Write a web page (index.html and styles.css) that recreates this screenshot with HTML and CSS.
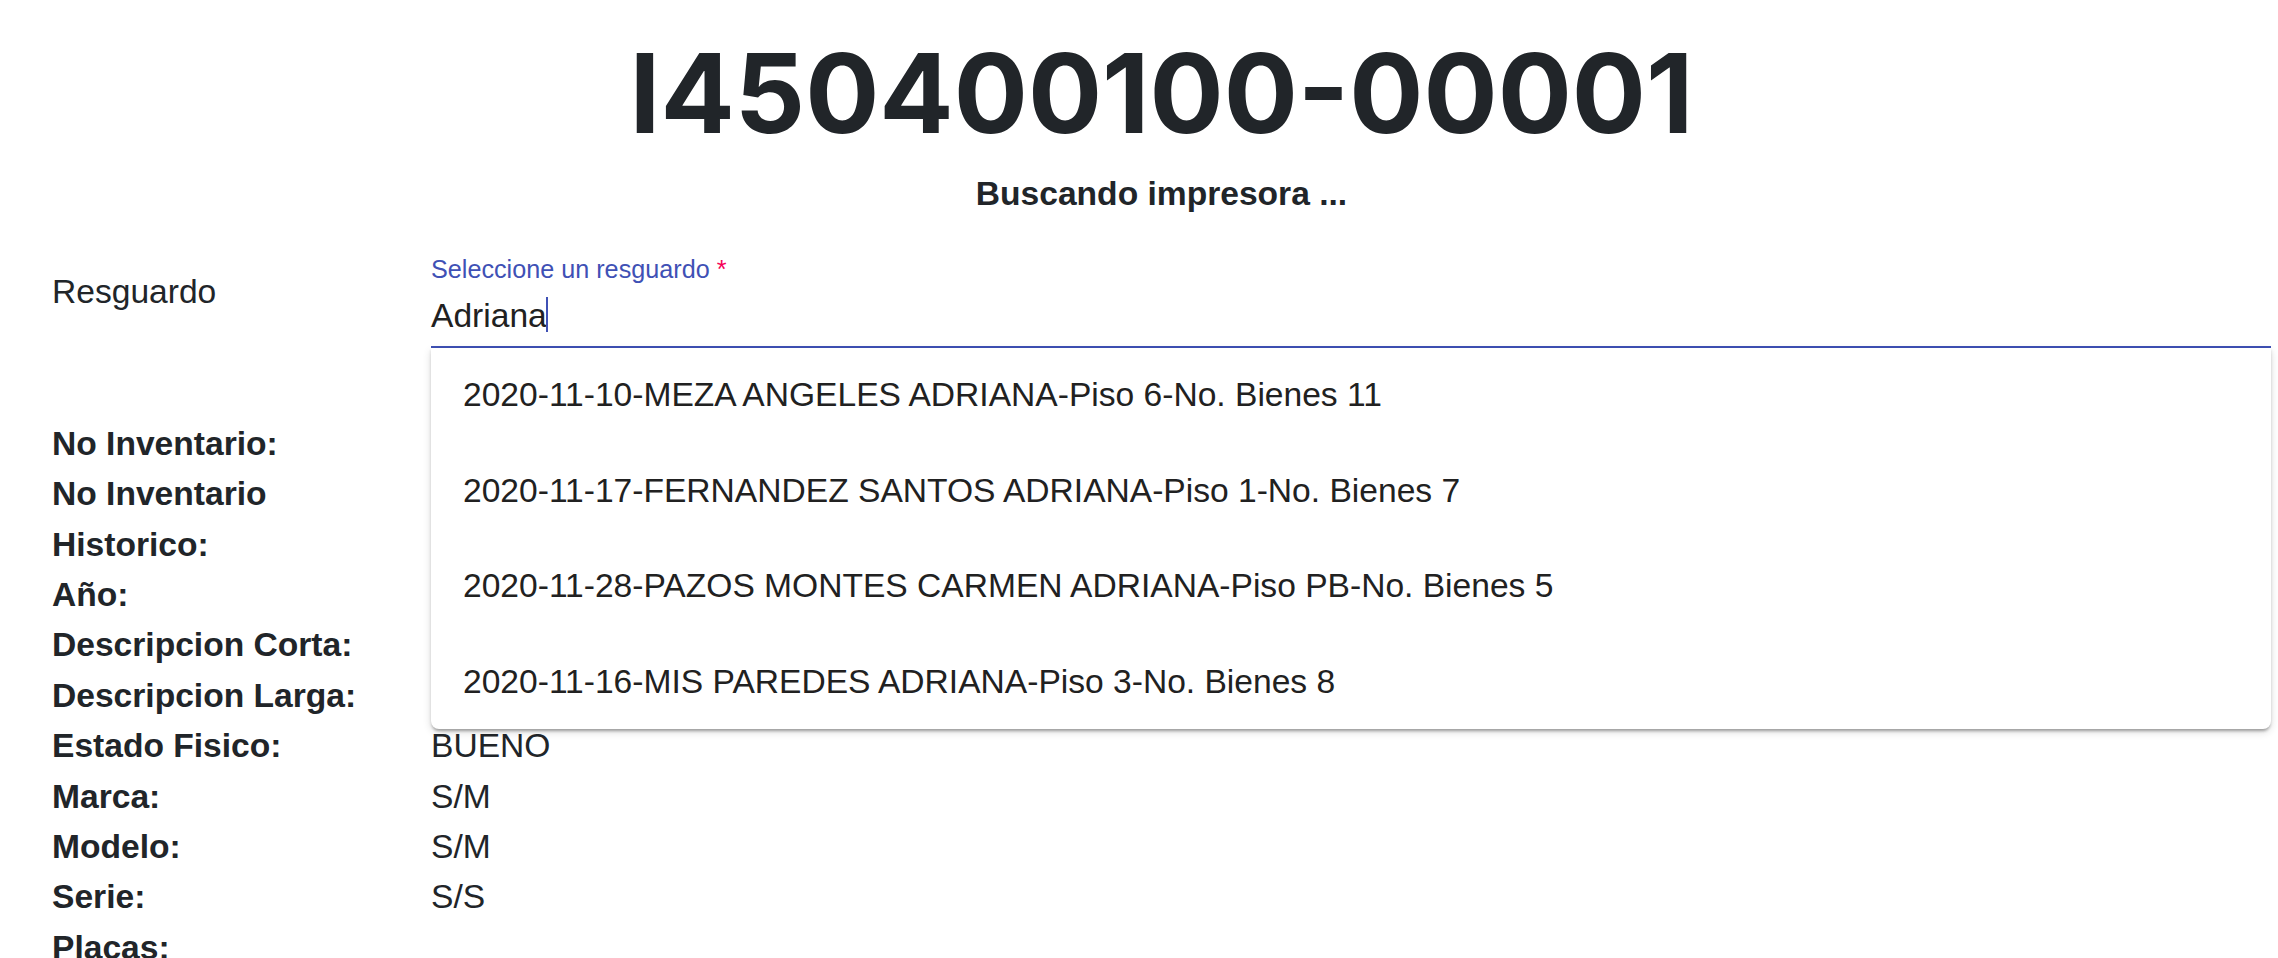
FILE: index.html
```html
<!DOCTYPE html>
<html lang="es">
<head>
<meta charset="utf-8">
<title>I450400100-00001</title>
<link rel="stylesheet" href="styles.css">
</head>
<body>
<main class="page">
  <h1 class="title">I450400100-00001</h1>
  <p class="status">Buscando impresora ...</p>

  <div class="row resguardo-row">
    <div class="label-plain">Resguardo</div>
    <div class="field">
      <label class="float-label">Seleccione un resguardo<span class="req"> *</span></label>
      <div class="input-line"><span class="input-text">Adriana</span><span class="caret"></span></div>
      <ul class="dropdown">
        <li class="option">2020-11-10-MEZA ANGELES ADRIANA-Piso 6-No. Bienes 11</li>
        <li class="option">2020-11-17-FERNANDEZ SANTOS ADRIANA-Piso 1-No. Bienes 7</li>
        <li class="option">2020-11-28-PAZOS MONTES CARMEN ADRIANA-Piso PB-No. Bienes 5</li>
        <li class="option">2020-11-16-MIS PAREDES ADRIANA-Piso 3-No. Bienes 8</li>
      </ul>
    </div>
  </div>

  <dl class="details">
    <dt>No Inventario:</dt><dd></dd>
    <dt>No Inventario<br>Historico:</dt><dd></dd>
    <dt>Año:</dt><dd></dd>
    <dt>Descripcion Corta:</dt><dd></dd>
    <dt>Descripcion Larga:</dt><dd></dd>
    <dt>Estado Fisico:</dt><dd>BUENO</dd>
    <dt>Marca:</dt><dd>S/M</dd>
    <dt>Modelo:</dt><dd>S/M</dd>
    <dt>Serie:</dt><dd>S/S</dd>
    <dt>Placas:</dt><dd></dd>
  </dl>
</main>
</body>
</html>
```

FILE: styles.css
```css
* { box-sizing: border-box; }

html, body {
  margin: 0;
  padding: 0;
  background: #ffffff;
}

body {
  font-family: "Liberation Sans", Arial, Helvetica, sans-serif;
  font-size: 33.6px;
  line-height: 50.4px;
  color: #212529;
  overflow: hidden;
}

.page {
  padding: 0 7px 0 52px;
}

.title {
  margin: 23px 0 0 0;
  font-family: Inter, "Liberation Sans", Arial, sans-serif;
  font-size: 110px;
  line-height: 141px;
  font-weight: 700;
  letter-spacing: 0;
  text-align: center;
  color: #212529;
}

.status {
  margin: 5.4px 0 0 0;
  font-weight: 700;
  text-align: center;
}

.row {
  display: grid;
  grid-template-columns: 379px 1fr;
}

.resguardo-row {
  margin-top: 34px;
  align-items: start;
}

.label-plain {
  margin-top: 13px;
}

.field {
  position: relative;
}

.float-label {
  display: block;
  font-size: 25.2px;
  line-height: 30px;
  color: #3f51b5;
}

.req {
  color: #f50057;
}

.input-line {
  margin-top: 12.6px;
  font-size: 33.6px;
  line-height: 40px;
  padding-bottom: 9.4px;
  border-bottom: 2px solid #3f51b5;
  color: #212121;
}

.caret {
  display: inline-block;
  width: 2px;
  height: 35px;
  margin-left: -1px;
  vertical-align: -5px;
  background: #3f51b5;
}

.dropdown {
  position: absolute;
  top: 100%;
  left: 0;
  right: 0;
  margin: 0;
  padding: 0;
  list-style: none;
  background: #ffffff;
  border-radius: 0 0 8px 8px;
  box-shadow: 0 4px 3px -2px rgba(0,0,0,0.2), 0 2px 3px 0 rgba(0,0,0,0.14), 0 3px 9px 0 rgba(0,0,0,0.14);
  z-index: 5;
}

.option {
  padding: 22.6px 32px 22.4px;
  line-height: 50.4px;
  color: #212121;
  white-space: nowrap;
}

.details {
  display: grid;
  grid-template-columns: 379px 1fr;
  margin: 71px 0 0 0;
}

.details dt {
  font-weight: 700;
}

.details dd {
  margin: 0;
}
```
